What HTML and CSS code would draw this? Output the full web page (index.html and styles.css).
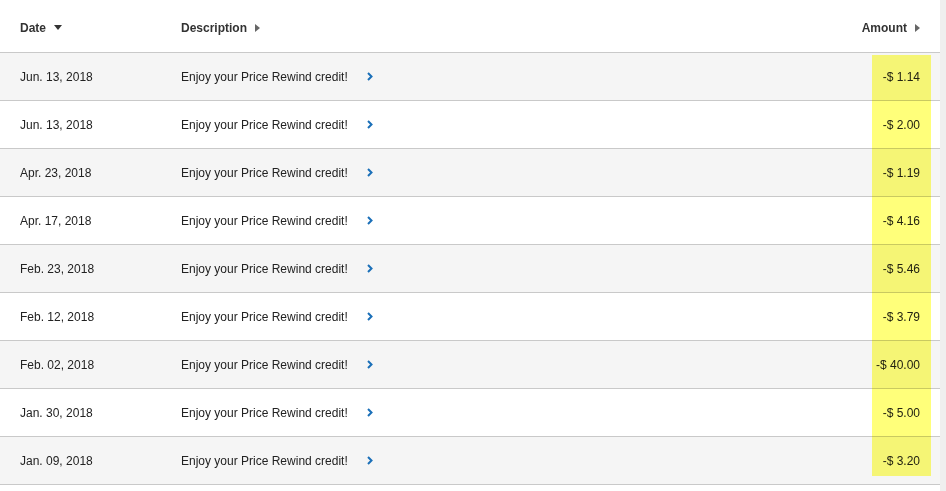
FILE: index.html
```html
<!DOCTYPE html>
<html>
<head>
<meta charset="utf-8">
<link rel="stylesheet" href="styles.css">
</head>
<body>
<div class="page">
  <div class="table">
    <div class="row head">
      <div class="c-date">Date <span class="tri-down"></span></div>
      <div class="c-desc">Description <span class="tri-right"></span></div>
      <div class="c-amt">Amount <span class="tri-right"></span></div>
    </div>
    <div class="row odd"><div class="c-date">Jun. 13, 2018</div><div class="c-desc">Enjoy your Price Rewind credit!<svg class="chev" width="6" height="9" viewBox="0 0 6 9"><polyline points="1,1 4.5,4.5 1,8" fill="none" stroke="#1a6fb8" stroke-width="2"/></svg></div><div class="c-amt">-$ 1.14</div></div>
    <div class="row"><div class="c-date">Jun. 13, 2018</div><div class="c-desc">Enjoy your Price Rewind credit!<svg class="chev" width="6" height="9" viewBox="0 0 6 9"><polyline points="1,1 4.5,4.5 1,8" fill="none" stroke="#1a6fb8" stroke-width="2"/></svg></div><div class="c-amt">-$ 2.00</div></div>
    <div class="row odd"><div class="c-date">Apr. 23, 2018</div><div class="c-desc">Enjoy your Price Rewind credit!<svg class="chev" width="6" height="9" viewBox="0 0 6 9"><polyline points="1,1 4.5,4.5 1,8" fill="none" stroke="#1a6fb8" stroke-width="2"/></svg></div><div class="c-amt">-$ 1.19</div></div>
    <div class="row"><div class="c-date">Apr. 17, 2018</div><div class="c-desc">Enjoy your Price Rewind credit!<svg class="chev" width="6" height="9" viewBox="0 0 6 9"><polyline points="1,1 4.5,4.5 1,8" fill="none" stroke="#1a6fb8" stroke-width="2"/></svg></div><div class="c-amt">-$ 4.16</div></div>
    <div class="row odd"><div class="c-date">Feb. 23, 2018</div><div class="c-desc">Enjoy your Price Rewind credit!<svg class="chev" width="6" height="9" viewBox="0 0 6 9"><polyline points="1,1 4.5,4.5 1,8" fill="none" stroke="#1a6fb8" stroke-width="2"/></svg></div><div class="c-amt">-$ 5.46</div></div>
    <div class="row"><div class="c-date">Feb. 12, 2018</div><div class="c-desc">Enjoy your Price Rewind credit!<svg class="chev" width="6" height="9" viewBox="0 0 6 9"><polyline points="1,1 4.5,4.5 1,8" fill="none" stroke="#1a6fb8" stroke-width="2"/></svg></div><div class="c-amt">-$ 3.79</div></div>
    <div class="row odd"><div class="c-date">Feb. 02, 2018</div><div class="c-desc">Enjoy your Price Rewind credit!<svg class="chev" width="6" height="9" viewBox="0 0 6 9"><polyline points="1,1 4.5,4.5 1,8" fill="none" stroke="#1a6fb8" stroke-width="2"/></svg></div><div class="c-amt">-$ 40.00</div></div>
    <div class="row"><div class="c-date">Jan. 30, 2018</div><div class="c-desc">Enjoy your Price Rewind credit!<svg class="chev" width="6" height="9" viewBox="0 0 6 9"><polyline points="1,1 4.5,4.5 1,8" fill="none" stroke="#1a6fb8" stroke-width="2"/></svg></div><div class="c-amt">-$ 5.00</div></div>
    <div class="row odd"><div class="c-date">Jan. 09, 2018</div><div class="c-desc">Enjoy your Price Rewind credit!<svg class="chev" width="6" height="9" viewBox="0 0 6 9"><polyline points="1,1 4.5,4.5 1,8" fill="none" stroke="#1a6fb8" stroke-width="2"/></svg></div><div class="c-amt">-$ 3.20</div></div>
    <div class="highlight"></div>
  </div>
</div>
</body>
</html>
```
FILE: styles.css
```css
html, body {
  margin: 0;
  padding: 0;
  background: #efefef;
}
body {
  font-family: "Liberation Sans", Arial, Helvetica, sans-serif;
  font-size: 12px;
  color: #222;
}
.page {
  width: 940px;
  min-height: 491px;
  background: #fff;
}
.table {
  position: relative;
}
.row {
  display: flex;
  align-items: center;
  height: 47px;
  border-bottom: 1px solid #c9c9c9;
  padding: 0 20px;
  background: #fff;
}
.row.odd {
  background: #f5f5f5;
}
.row.head {
  height: 52px;
  font-weight: bold;
  color: #333;
  padding-top: 3px;
  box-sizing: border-box;
  height: 53px;
}
.c-date {
  width: 161px;
  display: flex;
  align-items: center;
}
.c-desc {
  flex: 1;
  display: flex;
  align-items: center;
}
.c-amt {
  display: flex;
  align-items: center;
  justify-content: flex-end;
}
.chev {
  margin-left: 19px;
  display: block;
}
.tri-down {
  display: inline-block;
  width: 0;
  height: 0;
  border-left: 4px solid transparent;
  border-right: 4px solid transparent;
  border-top: 5px solid #333;
  margin-left: 8px;
}
.tri-right {
  display: inline-block;
  width: 0;
  height: 0;
  border-top: 4px solid transparent;
  border-bottom: 4px solid transparent;
  border-left: 5px solid #666;
  margin-left: 8px;
}
.c-amt .tri-right {
  margin-left: 8px;
}
.highlight {
  position: absolute;
  left: 872px;
  top: 55px;
  width: 59px;
  height: 421px;
  background: rgba(255, 255, 0, 0.52);
  mix-blend-mode: multiply;
  pointer-events: none;
}
```
